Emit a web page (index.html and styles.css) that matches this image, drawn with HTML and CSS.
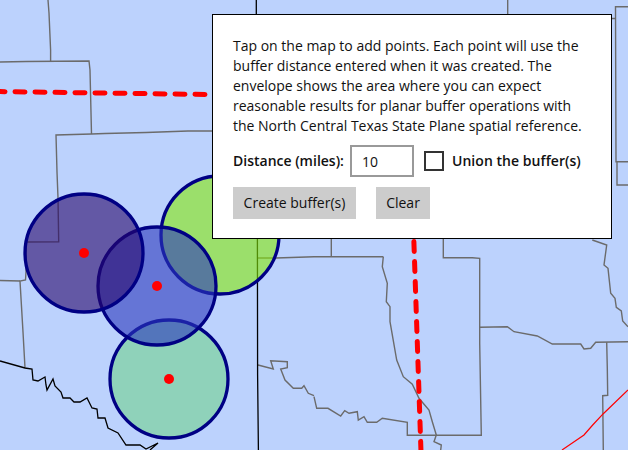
FILE: index.html
```html
<!DOCTYPE html>
<html lang="en">
<head>
<meta charset="utf-8">
<title>Buffer</title>
<link rel="stylesheet" href="styles.css">
</head>
<body>
<main class="view">
<svg class="map" width="628" height="450" viewBox="0 0 628 450" aria-hidden="true">
  <g class="county">
    <path d="M48 0L49 13L50.6 50L50.6 61"/>
    <path d="M0 62L26 61.5L89 61L90 70L91.5 134"/>
    <path d="M212 131L188 131L146 132.5L105 133.5L91.5 134L56 135L57 172L58 198L58.7 241.7L25 242"/>
    <path d="M26 242L26 272L25.5 280L20 281L23 332L25 368"/>
    <path d="M0 280.5L20 281"/>
    <path d="M507.7 0L507.7 14"/>
    <path d="M628 6.7L615.5 6.7L616 161.7L617 161.7L617 185L628 185M617 161.7L628 161.7M612 18.5L616 18.5"/>
    <path d="M258 258L276 258L314 256.7L383.3 256.7"/>
    <path d="M331.3 239L331.3 256.7"/>
    <path d="M383.3 256.7L382.3 266.7L387.3 283.3L386.3 301.7L390 306.7L390 321.7L396.7 360L403.3 376.7L412.3 384.3L419 398.3L429 410L432.3 421.7L436.3 435L434 441.7L441.3 445L440.7 450"/>
    <path d="M314 396.7L316.7 408.3L328 408.3L340.7 416L344.7 410.7L349 413.3L357.3 411.7L358.3 420L364 416.7L367.3 422.3L376.7 422.3L382.3 418.3L407.3 422.3L407.3 435.3L481.3 435.3L479.7 343.3L479.7 258.3L472.3 257.7L443.3 257.7L443.3 239"/>
    <path d="M479.7 327.3L507.3 326.7L514 331.7L537.3 336L552.3 344L580.7 344L584 349L590.7 348.3L595.7 342.3L628 341.7"/>
    <path d="M606.7 342.3L607.3 368.3L607.7 395.3L602.7 395.7L603.3 450"/>
    <path d="M592.3 240L606.7 245L604 265L608 268.3L610.7 293.3L615 298.3L616.3 307.3L621.3 311L622.7 321L628 326.7"/>
    <path d="M258 365L273.3 369L270.7 360.7L287.3 361.7L287.3 367.7L280.7 369L285 380L293.3 388.3L301.7 388.3L304 385.7L308.3 393.3L314 395.7"/>
  </g>
  <g class="border">
    <path d="M256.3 0L256.3 14"/>
    <path d="M257.4 239L257.6 375L258.4 450"/>
    <path d="M0 361L25 368L32 369L33 380L38 381L45 377L46 385L47 390L53 379L55 386L61 392L63 398L70 398L74 402L80 402L87 398L92 408L97 409L98 418L105 418L108 428L118 433L126 445L140 445L146 449L158 443L150 450"/>
  </g>
  <path class="highway" d="M562 450L584 435L592.7 425L603.3 413.7L628 390"/>
  <path class="dash" d="M-5 91.5L208 94.5"/>
  <path class="dash" d="M413.2 221.5L421 452"/>
  <g class="buffers">
    <circle class="buffer-green" cx="220" cy="235" r="59"/>
    <circle class="buffer-teal" cx="169" cy="379" r="59"/>
    <circle class="buffer-blue" cx="157" cy="286" r="59"/>
    <circle class="buffer-purple" cx="84" cy="253" r="59"/>
  </g>
  <g class="points">
    <circle cx="84" cy="253" r="5"/>
    <circle cx="157" cy="286" r="5"/>
    <circle cx="169" cy="379" r="5"/>
  </g>
</svg>
<section class="panel">
  <p class="intro">Tap on the map to add points. Each point will use the buffer distance entered when it was created. The envelope shows the area where you can expect reasonable results for planar buffer operations with the North Central Texas State Plane spatial reference.</p>
  <div class="options">
    <label class="field-label" for="distance">Distance (miles):</label>
    <input class="distance" id="distance" type="text" value="10">
    <span class="check" role="checkbox" aria-checked="false"></span>
    <span class="check-label">Union the buffer(s)</span>
  </div>
  <div class="actions">
    <button class="btn btn-create" type="button">Create buffer(s)</button>
    <button class="btn btn-clear" type="button">Clear</button>
  </div>
</section>
</main>
</body>
</html>
```
FILE: styles.css
```css
* { box-sizing: border-box; }
html, body { margin: 0; padding: 0; }
body { width: 628px; height: 450px; overflow: hidden; background: #bcd2fd; font-family: "Open Sans", "Noto Sans", sans-serif; color: #111; }
.view { position: relative; width: 628px; height: 450px; overflow: hidden; }
.map { display: block; }
.map path { fill: none; }
.county path { stroke: #6b6b6b; stroke-width: 1.4; }
.border path { stroke: #000; stroke-width: 1.3; }
.highway { stroke: #f00; stroke-width: 1.2; }
.dash { stroke: #f00; stroke-width: 5; stroke-dasharray: 10 10; stroke-linecap: round; }
.buffers circle { stroke: #000084; stroke-width: 3.3; }
.buffer-green { fill: rgba(133, 232, 10, .6); }
.buffer-teal { fill: rgba(113, 210, 142, .6); }
.buffer-blue { fill: rgba(43, 55, 188, .6); }
.buffer-purple { fill: rgba(40, 7, 106, .6); }
.points circle { fill: #f00; }
.panel { position: absolute; left: 212px; top: 14px; width: 400px; height: 225px; background: #fff; border: 1px solid #000; padding: 21px 20px 0; font-size: 14px; line-height: 20px; }
.intro { margin: 0 0 9px; }
.options { display: flex; align-items: center; height: 32px; }
.field-label { font-weight: 600; margin-right: 6px; }
.distance { width: 64px; height: 32px; border: 2px solid #999; padding: 0 10px; font: inherit; color: inherit; background: #fff; outline: 0; border-radius: 0; }
.check { width: 20px; height: 20px; border: 2px solid #333; margin-left: 10px; margin-right: 8px; }
.check-label { font-weight: 600; letter-spacing: .05px; }
.actions { display: flex; gap: 20px; margin-top: 10px; }
.btn { height: 32px; border: 0; border-radius: 0; background: #ccc; color: inherit; font: inherit; padding: 0; }
.btn-create { width: 123px; }
.btn-clear { width: 54px; }
```
